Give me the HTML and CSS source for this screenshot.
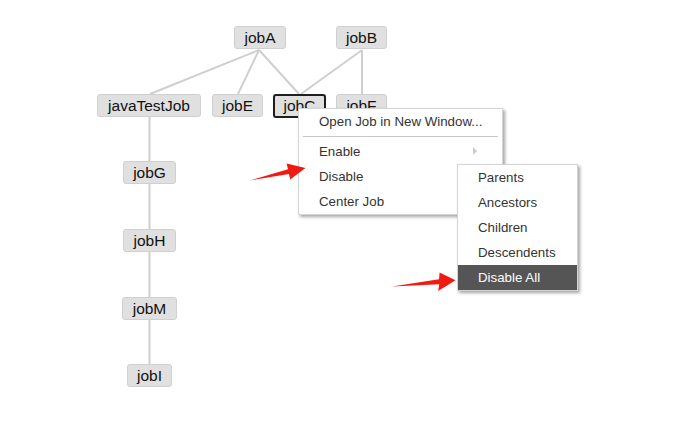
FILE: index.html
```html
<!DOCTYPE html>
<html>
<head>
<meta charset="utf-8">
<link rel="stylesheet" href="styles.css">
</head>
<body>
<div class="canvas">
  <svg class="edges" width="697" height="434" viewBox="0 0 697 434">
    <g stroke="#cfcfcf" stroke-width="2" fill="none">
      <line x1="259" y1="50" x2="150" y2="94"/>
      <line x1="259" y1="50" x2="238" y2="94"/>
      <line x1="259" y1="50" x2="299" y2="94"/>
      <line x1="362" y1="50" x2="301" y2="94"/>
      <line x1="362" y1="50" x2="362" y2="94"/>
      <line x1="149.5" y1="117" x2="149.5" y2="364"/>
    </g>
  </svg>

  <div class="node n-jobA">jobA</div>
  <div class="node n-jobB">jobB</div>
  <div class="node n-java">javaTestJob</div>
  <div class="node n-jobE">jobE</div>
  <div class="node n-jobC selected">jobC</div>
  <div class="node n-jobF">jobF</div>
  <div class="node n-jobG">jobG</div>
  <div class="node n-jobH">jobH</div>
  <div class="node n-jobM">jobM</div>
  <div class="node n-jobI">jobI</div>

  <ul class="menu main-menu">
    <li class="item">Open Job in New Window...</li>
    <li class="sep"></li>
    <li class="item has-sub">Enable<span class="caret"></span></li>
    <li class="item">Disable</li>
    <li class="item">Center Job</li>
  </ul>

  <ul class="menu sub-menu">
    <li class="item">Parents</li>
    <li class="item">Ancestors</li>
    <li class="item">Children</li>
    <li class="item">Descendents</li>
    <li class="item active">Disable All</li>
  </ul>

  <svg class="arrows" width="697" height="434" viewBox="0 0 697 434">
    <polygon fill="#f21a10" points="250,180.5 288,169.2 286.6,163.6 305.5,168 290.2,179.6 288.9,174"/>
    <polygon fill="#f21a10" points="392,286.5 439,279.2 439.6,272.6 455.5,280.2 438.2,291 439.2,284.2"/>
  </svg>
</div>
</body>
</html>
```
FILE: styles.css
```css
html, body {
  margin: 0;
  padding: 0;
  background: #ffffff;
}

body {
  font-family: "Liberation Sans", Arial, sans-serif;
}

.canvas {
  position: relative;
  width: 697px;
  height: 434px;
  overflow: hidden;
}

.edges,
.arrows {
  position: absolute;
  left: 0;
  top: 0;
}

.arrows {
  z-index: 10;
}

.node {
  position: absolute;
  box-sizing: border-box;
  height: 23px;
  line-height: 21px;
  font-size: 15.5px;
  color: #111;
  text-align: center;
  background: #e0e0e0;
  border: 1px solid #d0d0d0;
  border-radius: 3px;
  white-space: nowrap;
}

.node.selected {
  border: 2px solid #1e1e1e;
  line-height: 19px;
}

.n-jobA { left: 234px; top: 26px; width: 52px; }
.n-jobB { left: 336px; top: 26px; width: 51px; }
.n-java { left: 97px; top: 94px; width: 104px; }
.n-jobE { left: 212px; top: 94px; width: 51px; }
.n-jobC { left: 273px; top: 94px; width: 53px; height: 24px; }
.n-jobF { left: 336px; top: 94px; width: 51px; }
.n-jobG { left: 123px; top: 161px; width: 53px; }
.n-jobH { left: 123px; top: 229px; width: 53px; }
.n-jobM { left: 122px; top: 297px; width: 55px; }
.n-jobI { left: 127px; top: 364px; width: 45px; }

.menu {
  position: absolute;
  list-style: none;
  margin: 0;
  padding: 0;
  box-sizing: border-box;
  background: #ffffff;
  border: 1px solid #d4d4d4;
  box-shadow: 2px 2px 3px rgba(0, 0, 0, 0.35);
  font-size: 13.3px;
  color: #333;
}

.main-menu {
  left: 298px;
  top: 108px;
  width: 205px;
  z-index: 5;
}

.sub-menu {
  left: 457px;
  top: 164px;
  width: 121px;
  z-index: 6;
}

.item {
  position: relative;
  height: 25px;
  line-height: 25px;
  padding-left: 20px;
  white-space: nowrap;
}

.sep {
  height: 1px;
  margin: 2px 4px 2px 4px;
  background: #c8c8c8;
}

.caret {
  position: absolute;
  right: 25px;
  top: 8px;
  width: 0;
  height: 0;
  border-top: 4px solid transparent;
  border-bottom: 4px solid transparent;
  border-left: 4px solid #cccccc;
}

.item.active {
  background: #555555;
  color: #ffffff;
}
```
